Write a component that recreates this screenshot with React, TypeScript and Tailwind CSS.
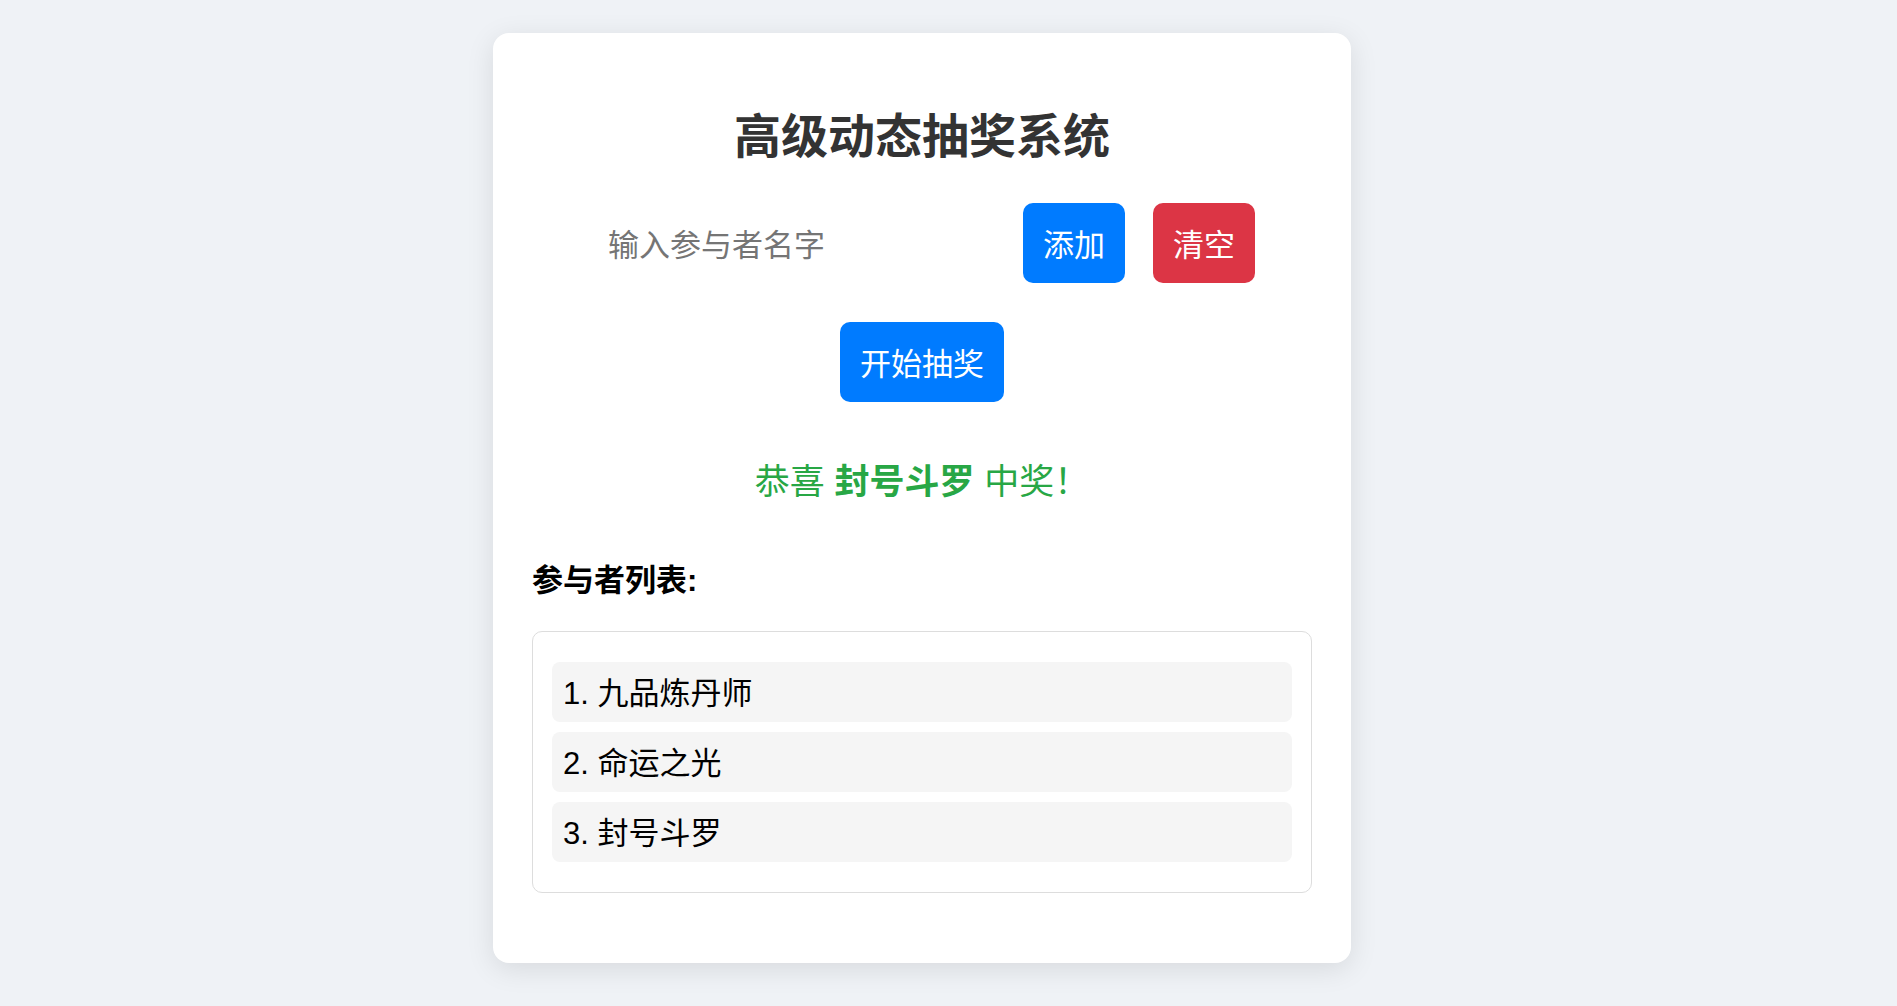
import { useState } from "react";

const font = "font-['Liberation_Sans','Noto_Sans_CJK_SC',sans-serif]";

function App() {
    const [names] = useState(["九品炼丹师", "命运之光", "封号斗罗"]);
    const winner = "封号斗罗";

    return (
        <div className={`min-h-screen bg-[#eff2f6] flex justify-center pr-[53px] ${font}`}>
            <div className="mt-[33px] mb-[44px] w-[858px] self-start bg-white rounded-[16px] shadow-[0_6px_28px_rgba(0,0,0,0.1)] px-[39px] pt-[39px] pb-[70px]">
                <h1 className="mt-[31px] text-center text-[47px] leading-[68px] font-bold text-[#333]">
                    高级动态抽奖系统
                </h1>

                <div className="mt-[32px] flex justify-center gap-[28px] h-[80px]">
                    <input
                        type="text"
                        placeholder="输入参与者名字"
                        className="w-[406px] pl-[19px] pt-[6px] text-[31px] outline-none bg-transparent placeholder:text-[#757575]"
                    />
                    <button className="px-[20px] pt-[6px] rounded-[10px] bg-[#007bff] text-white text-[31px]">添加</button>
                    <button className="px-[20px] pt-[6px] rounded-[10px] bg-[#dc3545] text-white text-[31px]">清空</button>
                </div>

                <div className="mt-[39px] flex justify-center">
                    <button className="h-[80px] px-[20px] pt-[6px] rounded-[10px] bg-[#007bff] text-white text-[31px]">开始抽奖</button>
                </div>

                <p className="mt-[54px] text-center text-[35px] leading-[52px] text-[#28a745]">
                    恭喜 <strong className="font-bold">{winner}</strong> 中奖！
                </p>

                <h3 className="mt-[51px] text-[31px] leading-[44px] font-bold text-black">参与者列表:</h3>

                <ul className="mt-[28px] border border-[#dddddd] rounded-[10px] px-[19px] py-[30px] flex flex-col gap-[10px]">
                    {names.map((n, i) => (
                        <li key={n} className="h-[60px] flex items-center pl-[11px] pt-[5px] bg-[#f5f5f5] rounded-[8px] text-[31px] text-black">
                            {i + 1}. {n}
                        </li>
                    ))}
                </ul>
            </div>
        </div>
    );
}

export default App;
